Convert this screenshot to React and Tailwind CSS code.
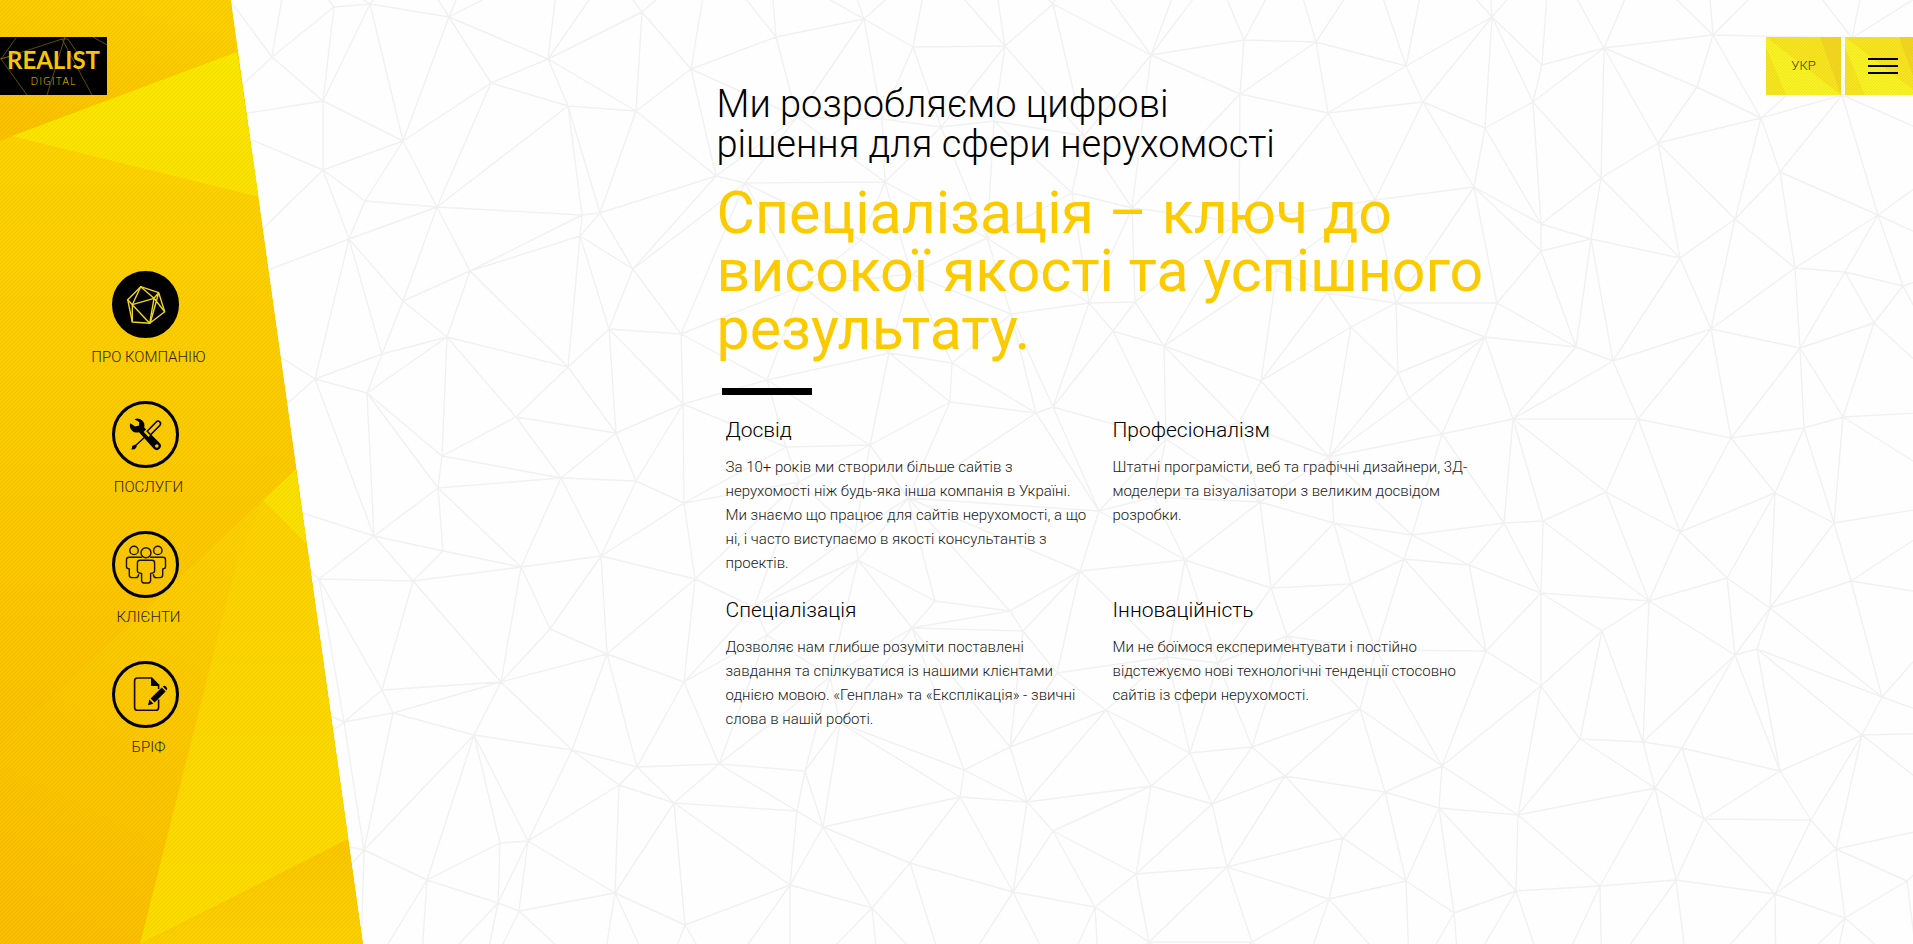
import React from "react";

// Nodes of the polygon mesh behind the page, on a 1913 x 944 canvas.
const MESH_NODES = `272,57 334,7 370,4 449,17 491,83 548,59 568,106 636,111 642,12 691,69 776,37 864,19 913,47 1005,46 1053,4
323,101 403,141 323,170 365,201 437,207 582,215 600,213 580,236 470,271 349,239 403,301 633,269 716,176 745,183 885,182
797,117 882,119 941,127 994,121 1084,136 1240,94 1328,113 1423,102 1485,128 1072,193 1132,208 1239,222 1375,200 1474,187
861,240 987,238 911,274 802,286 1011,314 1089,303 1135,302 1277,270 1327,293 1396,303 1113,331 1164,346 1351,327 1485,337
889,353 952,363 767,380 1261,381 1398,373 382,354 447,337 609,329 681,334 568,367 315,379 367,393 516,417 616,433 683,404
442,456 561,478 950,402 786,447 870,445 1036,413 1053,407 1151,55 1244,40 1316,42 1406,66 1492,17 1604,48 1542,65 1713,35
1533,102 1761,118 1697,87 1658,143 1601,178 1541,224 1541,251 1591,239 1680,258 1735,219 1780,172 1878,215 1795,268 1845,272
1903,286 1497,303 1576,347 1613,361 1711,329 1800,348 1874,323 1513,419 1638,419 1731,438 1804,428 1843,417 1442,434
1409,398 1329,457 1239,423 1166,439 374,536 319,579 382,690 344,722 393,713 364,850 438,488 636,481 684,503 443,551 521,567
601,556 413,581 695,579 550,629 607,654 501,682 684,682 474,735 572,750 637,767 619,785 674,803 719,764 805,771 797,811
823,827 964,770 960,797 1027,802 1010,747 1053,831 910,863 790,885 872,908 1013,892 1095,907 615,893 685,925 519,911 498,903
528,841 500,843 427,880 799,482 908,498 1099,511 855,533 858,560 1080,571 935,601 1010,611 912,628 1023,631 767,635 754,607
1057,673 830,677 840,723 1106,710 1185,560 1260,502 1154,497 1334,523 1412,535 1404,559 1469,565 1271,588 1351,584 1287,636
1218,663 1167,657 1486,651 1376,650 1360,709 1504,523 1543,521 1606,492 1680,532 1775,493 1834,523 1727,578 1649,601
1541,593 1770,608 1851,581 1602,631 1735,655 1757,649 1882,697 1541,686 1862,735 1580,739 1643,742 1682,748 1780,771
1655,788 1704,819 1811,820 1836,849 1518,815 1439,808 1442,766 1385,792 1285,776 1252,747 1190,753 1151,786 1212,804
1343,838 1227,867 1136,874 1329,899 1406,881 1454,913 1516,891 1600,886 1676,880 1775,894 1845,918 1907,881 1149,942
1252,942 1852,38 1842,95 200,-40 290,-50 410,-44 478,-52 560,-40 610,-30 710,-46 770,-34 840,-50 930,-40 990,-52 1080,-42
1190,-50 1215,-30 1290,-46 1370,-40 1430,-52 1488,-38 1550,-50 1640,-36 1706,-50 1790,-42 1870,-50 1960,-30 205,120 190,300
200,480 210,660 220,820 250,980 360,990 420,985 480,992 600,986 660,990 720,984 790,992 880,986 950,990 1060,984 1100,992
1200,990 1300,984 1410,990 1460,986 1550,992 1602,984 1690,990 1776,986 1830,990 1920,984 1975,70 1968,150 1975,260
1970,410 1975,500 1968,600 1978,732 1970,820`
  .split(/\s+/)
  .map((pair) => pair.split(",").map(Number));

// Delaunay triangulation (Bowyer-Watson); returns one path of unique edges.
function meshPath(nodes) {
  const pts = nodes.concat([[-9000, -9000], [11000, -9000], [1000, 16000]]);
  const n = nodes.length;
  const make = (a, b, c) => {
    const [ax, ay] = pts[a];
    const [bx, by] = pts[b];
    const [cx, cy] = pts[c];
    const d = 2 * (ax * (by - cy) + bx * (cy - ay) + cx * (ay - by)) || 1e-9;
    const A = ax * ax + ay * ay;
    const B = bx * bx + by * by;
    const C = cx * cx + cy * cy;
    const x = (A * (by - cy) + B * (cy - ay) + C * (ay - by)) / d;
    const y = (A * (cx - bx) + B * (ax - cx) + C * (bx - ax)) / d;
    return { v: [a, b, c], x, y, r: (ax - x) ** 2 + (ay - y) ** 2 };
  };
  let tris = [make(n, n + 1, n + 2)];
  for (let i = 0; i < n; i++) {
    const [px, py] = pts[i];
    const keep = [];
    const edges = new Map();
    for (const t of tris) {
      if ((px - t.x) ** 2 + (py - t.y) ** 2 >= t.r) {
        keep.push(t);
        continue;
      }
      for (let k = 0; k < 3; k++) {
        const a = Math.min(t.v[k], t.v[(k + 1) % 3]);
        const b = Math.max(t.v[k], t.v[(k + 1) % 3]);
        const key = a + "-" + b;
        if (edges.has(key)) edges.delete(key);
        else edges.set(key, [a, b]);
      }
    }
    for (const [a, b] of edges.values()) keep.push(make(a, b, i));
    tris = keep;
  }
  const seen = new Set();
  let d = "";
  for (const t of tris) {
    for (let k = 0; k < 3; k++) {
      const a = Math.min(t.v[k], t.v[(k + 1) % 3]);
      const b = Math.max(t.v[k], t.v[(k + 1) % 3]);
      const key = a + "-" + b;
      if (b >= n || seen.has(key)) continue;
      seen.add(key);
      d += `M${pts[a][0]} ${pts[a][1]}L${pts[b][0]} ${pts[b][1]}`;
    }
  }
  return d;
}

const MESH = meshPath(MESH_NODES);

function MeshBackground() {
  return (
    <svg
      aria-hidden="true"
      className="absolute inset-0 h-full w-full"
      viewBox="0 0 1913 944"
      preserveAspectRatio="xMidYMid slice"
    >
      <path d={MESH} fill="none" stroke="#f1f1f1" strokeWidth="1.4" />
    </svg>
  );
}

function PanelFacets() {
  return (
    <svg
      aria-hidden="true"
      className="absolute inset-0 h-full w-full"
      viewBox="0 0 363 944"
      preserveAspectRatio="none"
    >
      <defs>
        <linearGradient id="top" x1="0.7" y1="0" x2="0.2" y2="1">
          <stop offset="0" stopColor="#fbd000" />
          <stop offset="1" stopColor="#f9c000" />
        </linearGradient>
        <linearGradient id="bright" x1="0" y1="0" x2="0" y2="1">
          <stop offset="0" stopColor="#fae800" />
          <stop offset="1" stopColor="#fae100" />
        </linearGradient>
        <linearGradient id="mid" x1="0" y1="0" x2="0" y2="1">
          <stop offset="0" stopColor="#fcd600" />
          <stop offset="1" stopColor="#f9bc00" />
        </linearGradient>
        <linearGradient id="low" x1="0.6" y1="0" x2="0.2" y2="1">
          <stop offset="0" stopColor="#fbd000" />
          <stop offset="1" stopColor="#f9be00" />
        </linearGradient>
        <linearGradient id="light" x1="0" y1="0" x2="0" y2="1">
          <stop offset="0" stopColor="#fbd100" />
          <stop offset="1" stopColor="#fcdc00" />
        </linearGradient>
        <linearGradient id="foot" x1="0" y1="0" x2="0" y2="1">
          <stop offset="0" stopColor="#f9c600" />
          <stop offset="1" stopColor="#fbd000" />
        </linearGradient>
        <pattern id="weave" width="4" height="4" patternUnits="userSpaceOnUse">
          <path d="M-1 1L1 -1M0 4L4 0M3 5L5 3" stroke="#c98c00" strokeOpacity="0.17" strokeWidth="1" />
        </pattern>
        <clipPath id="panel">
          <path d="M0 0H231L363 944H0Z" />
        </clipPath>
      </defs>
      <g clipPath="url(#panel)">
        <path d="M0 0H231L363 944H0Z" fill="url(#mid)" />
        <path d="M0 0H231L237 52L12 136L0 141Z" fill="url(#top)" />
        <path d="M12 136L237 52L259 197Z" fill="url(#bright)" />
        <path d="M0 745L263 500L307 545L363 944H0Z" fill="url(#low)" />
        <path d="M263 500L296 469L307 545Z" fill="#fae000" />
        <path d="M140 944L236 565L263 500L307 545L349 839Z" fill="url(#light)" />
        <path d="M140 944L348 839L363 944Z" fill="url(#foot)" />
        <path d="M0 0H363V944H0Z" fill="url(#weave)" />
      </g>
    </svg>
  );
}

function LogoWeb() {
  return (
    <svg aria-hidden="true" className="absolute inset-0 h-full w-full" viewBox="0 0 107 58">
      <path
        d="M16 1L1 22L27 58M0 22L12 19M1 22L62 2L92 58M65 0L47 58M93 0L107 8M62 2H68L80 20"
        fill="none"
        stroke="#8a6a08"
        strokeWidth="0.7"
      />
    </svg>
  );
}

function ButtonFacets({ id }) {
  return (
    <svg
      aria-hidden="true"
      className="absolute inset-0 h-full w-full"
      viewBox="0 0 75 58"
      preserveAspectRatio="xMinYMin slice"
    >
      <defs>
        <pattern id={id} width="3" height="3" patternUnits="userSpaceOnUse">
          <path d="M0 3L3 0" stroke="#c8a800" strokeOpacity="0.22" strokeWidth="0.8" />
        </pattern>
      </defs>
      <path d="M0 0H75V58H0Z" fill="#f8f324" />
      <path d="M0 0H75V58L0 0Z" fill="#f6e420" />
      <path d="M54 0H75V58Z" fill="#f2d520" />
      <path d="M0 10L20 58H0Z" fill="#f5e520" />
      <path d="M0 0H75V58H0Z" fill={`url(#${id})`} />
    </svg>
  );
}

const ICONS = {
  company: (
    <g fill="none" stroke="#efd422" strokeWidth="1.4" strokeLinejoin="round">
      <path d="M28.7 15.7L46.7 21.7L52.7 40.7L37.7 52.3L20.3 51L15.7 28.7Z" />
      <path d="M20.3 33.7L42 27.3L37.7 52.3Z" />
      <path d="M20.3 33.7L28.7 15.7L42 27.3L46.7 21.7M42 27.3L52.7 40.7M20.3 51V33.7L15.7 28.7M46.7 21.7L38.5 51" />
    </g>
  ),
  services: (
    <g>
      <path
        d="M22.5 18.3A7 7 0 0 1 32.2 26.4L47.6 42A4 4 0 0 1 41.8 47.8L27 31.2A7 7 0 0 1 18.3 22.2L23.2 25.6L27 24.4L27.2 21Z"
        fill="#000"
      />
      <circle cx="44.8" cy="45" r="1.8" fill="#f8c800" />
      <path d="M31.5 31L37.2 25.3L42 30L36.4 36Z" fill="#f8c800" />
      <path
        d="M35.2 30.3L44.2 21A2.4 2.4 0 0 1 47.8 24.4L38.6 33.8Z"
        fill="none"
        stroke="#000"
        strokeWidth="1.5"
      />
      <path d="M28 28.5L36 37.5" stroke="#000" strokeWidth="2" />
      <path d="M34 35L22.6 45.4" stroke="#000" strokeWidth="1.3" />
      <path d="M20.4 44.8L23.6 43.6L24.8 45.4L22.8 48.2L19.4 48.4Z" fill="#000" />
    </g>
  ),
  clients: (
    <g fill="none" stroke="#1a1400" strokeWidth="1.4" strokeLinejoin="round" strokeLinecap="round">
      <circle cx="22" cy="19.4" r="4.2" />
      <circle cx="45.8" cy="19.4" r="4.2" />
      <circle cx="34" cy="21.7" r="5" />
      <path d="M29.5 26.3H17Q14.5 26.3 14.5 28.8V36Q14.5 37.6 17.3 38V44Q17.3 46.6 20 46.6H24Q26.4 46.6 26.6 43.6" />
      <path d="M38.5 26.3H51Q53.5 26.3 53.5 28.8V36Q53.5 37.6 50.7 38V44Q50.7 46.6 48 46.6H44Q41.6 46.6 41.4 43.6" />
      <path d="M28 29.3H40Q42.6 29.3 42.6 31.8V40Q42.6 42 38.6 42.4V49.6Q38.6 52 36.2 52H32Q29.6 52 29.6 49.6V42.4Q25.4 42 25.4 40V31.8Q25.4 29.3 28 29.3Z" />
    </g>
  ),
  brief: (
    <g>
      <path
        d="M46.6 38.5V46.4Q46.6 49.2 43.8 49.2H25.4Q22.6 49.2 22.6 46.4V19.8Q22.6 17 25.4 17H39.6L46.6 24V28"
        fill="none"
        stroke="#120e00"
        strokeWidth="1.6"
      />
      <path d="M39 16.5L47.4 25H39Z" fill="#000" />
      <path d="M36 44.2L37.4 38.6L41.4 42.8Z" fill="#000" />
      <path d="M38.6 37.4L49.8 26.6L53.6 30.4L42.6 41.6Z" fill="#000" />
      <path d="M50.8 25.6Q52.4 24 54.2 25.8Q56 27.6 54.6 29.4Z" fill="#000" />
    </g>
  ),
};

const NAV = [
  { icon: "company", label: "ПРО КОМПАНІЮ", active: true },
  { icon: "services", label: "ПОСЛУГИ" },
  { icon: "clients", label: "КЛІЄНТИ" },
  { icon: "brief", label: "БРІФ" },
];

function NavItem({ icon, label, active }) {
  return (
    <li>
      <a
        href={`#${icon}`}
        aria-current={active ? "page" : undefined}
        className="flex flex-col items-center gap-2"
      >
        <span className="pr-1.5">
          <svg aria-hidden="true" className="h-[67px] w-[67px]" viewBox="0 0 67 67">
            <circle cx="33.5" cy="33.5" r="32" fill={active ? "#000" : "none"} stroke="#000" strokeWidth="3" />
            {ICONS[icon]}
          </svg>
        </span>
        <span className="text-[15px] leading-[23px] text-[#2e2500]">{label}</span>
      </a>
    </li>
  );
}

const FEATURES = [
  {
    title: "Досвід",
    text: "За 10+ років ми створили більше сайтів з нерухомості ніж будь-яка інша компанія в Україні. Ми знаємо що працює для сайтів нерухомості, а що ні, і часто виступаємо в якості консультантів з проектів.",
  },
  {
    title: "Професіоналізм",
    text: "Штатні програмісти, веб та графічні дизайнери, 3Д-моделери та візуалізатори з великим досвідом розробки.",
  },
  {
    title: "Спеціалізація",
    text: "Дозволяє нам глибше розуміти поставлені завдання та спілкуватися із нашими клієнтами однією мовою. «Генплан» та «Експлікація» - звичні слова в нашій роботі.",
  },
  {
    title: "Інноваційність",
    text: "Ми не боїмося експериментувати і постійно відстежуємо нові технологічні тенденції стосовно сайтів із сфери нерухомості.",
  },
];

export default function App() {
  return (
    <div className="relative flex min-h-screen overflow-hidden bg-[#fefefe] font-['Roboto','Noto_Sans',sans-serif] font-light text-black">
      <MeshBackground />

      <aside className="relative flex w-[363px] shrink-0 flex-col">
        <PanelFacets />
        <a
          href="#home"
          aria-label="Realist Digital"
          className="relative mt-[37px] flex h-[58px] w-[107px] flex-col items-center justify-center bg-black text-[#f8c40c]"
        >
          <LogoWeb />
          <span className="relative font-['Lato',sans-serif] text-2xl leading-8 font-bold">
            REALIST
          </span>
          <span className="relative font-['DejaVu_Sans',sans-serif] text-[10px] leading-3 tracking-widest">
            DIGITAL
          </span>
        </a>
        <nav aria-label="Головне меню" className="relative mt-44 w-[297px]">
          <ul className="flex flex-col gap-8">
            {NAV.map((item) => (
              <NavItem key={item.icon} {...item} />
            ))}
          </ul>
        </nav>
      </aside>

      <main className="relative flex flex-1 justify-center pt-[84px] pr-[60px]">
        <div className="w-[783px]">
          <p className="text-[38px] leading-10">
            Ми розробляємо цифрові
            <br />
            рішення для сфери нерухомості
          </p>
          <h1 className="mt-5 text-[59px] leading-[58px] font-normal text-[#fbcb00]">
            Спеціалізація – ключ до
            <br />
            високої якості та успішного
            <br />
            результату.
          </h1>
          <div className="mt-[30px] ml-[5px] h-[7px] w-[90px] bg-black" />
          <div className="mt-5 mr-6 ml-[9px] grid grid-cols-2 gap-x-6 gap-y-5">
            {FEATURES.map(({ title, text }) => (
              <section key={title}>
                <h2 className="text-[21px] leading-[30px]">{title}</h2>
                <p className="mt-2.5 text-[15px] leading-6 text-[#1a1a1a]">{text}</p>
              </section>
            ))}
          </div>
        </div>
      </main>

      <div className="absolute top-[37px] right-0 flex gap-1">
        <button type="button" className="relative h-[58px] w-[75px] text-[13px] text-[#3a3400]">
          <ButtonFacets id="weave-lang" />
          <span className="relative">УКР</span>
        </button>
        <button
          type="button"
          aria-label="Меню"
          className="relative flex h-[58px] w-[68px] flex-col items-end justify-center gap-[5px] pr-[15px]"
        >
          <ButtonFacets id="weave-menu" />
          <span className="relative h-0.5 w-[30px] bg-black" />
          <span className="relative h-0.5 w-[30px] bg-black" />
          <span className="relative h-0.5 w-[30px] bg-black" />
        </button>
      </div>
    </div>
  );
}
